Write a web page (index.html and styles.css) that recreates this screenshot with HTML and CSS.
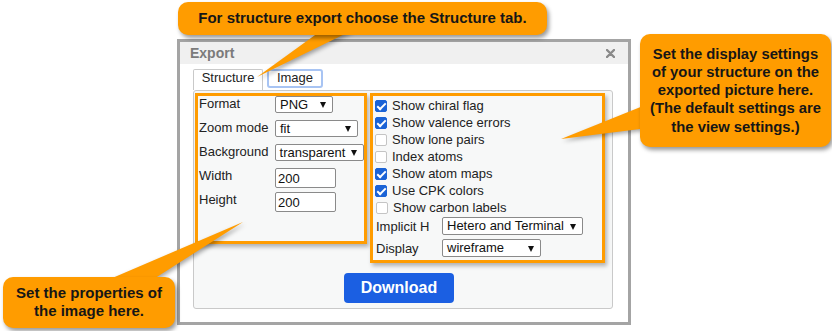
FILE: index.html
```html
<!DOCTYPE html>
<html>
<head>
<meta charset="utf-8">
<link rel="stylesheet" href="styles.css">
</head>
<body>
<div class="page">
  <div class="dialog">
    <div class="dlg-head">
      <span class="dlg-title">Export</span>
      <svg class="close" width="9" height="9" viewBox="0 0 9 9"><path d="M1 1L8 8M8 1L1 8" stroke="#8a8a8a" stroke-width="2.4" stroke-linecap="round"/></svg>
    </div>
    <div class="dlg-body">
      <div class="tabs">
        <div class="tab">Structure</div>
        <div class="tab tab-active">Image</div>
      </div>
      <div class="pane">
        <div class="boxes">
          <div class="obox props">
            <div class="frow"><span class="flabel">Format</span><div class="sel s-png">PNG</div></div>
            <div class="frow"><span class="flabel">Zoom mode</span><div class="sel s-zoom">fit</div></div>
            <div class="frow"><span class="flabel">Background</span><div class="sel s-bg">transparent</div></div>
            <div class="frow"><span class="flabel">Width</span><input class="num" type="text" value="200"></div>
            <div class="frow"><span class="flabel">Height</span><input class="num" type="text" value="200"></div>
          </div>
          <div class="obox settings">
            <label class="chk"><input type="checkbox" checked><span>Show chiral flag</span></label>
            <label class="chk"><input type="checkbox" checked><span>Show valence errors</span></label>
            <label class="chk"><input type="checkbox"><span>Show lone pairs</span></label>
            <label class="chk"><input type="checkbox"><span>Index atoms</span></label>
            <label class="chk"><input type="checkbox" checked><span>Show atom maps</span></label>
            <label class="chk"><input type="checkbox" checked><span>Use CPK colors</span></label>
            <label class="chk chk-last"><input type="checkbox"><span>Show carbon labels</span></label>
            <div class="srow first"><span class="slabel">Implicit H</span><div class="sel s-imp">Hetero and Terminal</div></div>
            <div class="srow"><span class="slabel">Display</span><div class="sel s-disp">wireframe</div></div>
          </div>
        </div>
        <button class="dl">Download</button>
      </div>
    </div>
  </div>

  <svg class="pointers" width="832" height="331" viewBox="0 0 832 331">
    <polygon points="322,30 353,30 257,77"/>
    <polygon points="648,104 648,128 561,139"/>
    <polygon points="103,282 149,282 243,222"/>
  </svg>

  <div class="callout c-top">For structure export choose the Structure tab.</div>
  <div class="callout c-right">Set the display settings<br>of your structure on the<br>exported picture here.<br>(The default settings are<br>the view settings.)</div>
  <div class="callout c-bl">Set the properties of<br>the image here.</div>
</div>
</body>
</html>
```
FILE: styles.css
```css
* { box-sizing: border-box; }
body { margin: 0; background: #fff; font-family: "Liberation Sans", Arial, sans-serif; }

.page { position: relative; width: 832px; height: 331px; overflow: hidden; padding: 39px 0 0 177px; }

.dialog { width: 454px; height: 286px; border: 3px solid #a4a4a4; background: #fff; }
.dlg-head { height: 22px; background: #f0f0f0; display: flex; align-items: center; justify-content: space-between; padding: 0 13px 0 10px; }
.dlg-title { font-weight: bold; font-size: 14px; color: #7b7b7b; }
.close { display: block; }

.dlg-body { padding: 5px 15px 0 13px; }
.tabs { display: flex; gap: 4px; height: 21px; align-items: flex-start; }
.tab { height: 21px; width: 70px; border: 1px solid #c9c9c9; border-bottom: none; border-radius: 2px 2px 0 0; background: #fff; font-size: 13px; color: #222; text-align: center; line-height: 16px; }
.tab-active { width: 56px; height: 19px; border: 2px solid #a8c4f3; border-radius: 3px; line-height: 14px; }

.pane { width: 420px; height: 219px; border: 1px solid #c9c9c9; border-radius: 3px; background: #f7f8f8; padding: 2px 0 0 1px; }
.boxes { display: flex; gap: 3px; align-items: flex-start; }
.obox { border: 3px solid #ff9c00; box-shadow: 2px 3px 4px rgba(0, 0, 0, 0.28); }
.props { width: 172px; height: 151px; padding-left: 1px; }
.settings { width: 235px; height: 170px; padding: 1px 0 0 2px; }

.frow { display: flex; height: 24px; align-items: flex-start; }
.flabel { width: 76px; font-size: 13px; line-height: 15px; color: #222; }

.sel { position: relative; height: 17px; border: 1px solid #8a8a8a; border-radius: 2px; background: #fff; font-size: 13px; color: #111; padding-left: 4px; line-height: 15px; }
.sel::after { content: ""; position: absolute; right: 6px; top: 5px; border-left: 3.5px solid transparent; border-right: 3.5px solid transparent; border-top: 6px solid #111; }
.s-png { width: 58px; }
.s-zoom { width: 83px; }
.s-bg { width: 90px; }
.s-imp { width: 141px; height: 18px; line-height: 16px; }
.s-disp { width: 99px; height: 18px; line-height: 16px; }
.s-imp::after, .s-disp::after { top: 5.5px; }

.num { width: 61px; height: 20px; border: 1px solid #8a8a8a; border-radius: 2px; background: #fff; font: 13px "Liberation Sans", Arial, sans-serif; color: #111; padding: 0 0 0 2px; margin: 0; }

.chk { display: flex; align-items: center; height: 17px; font-size: 13px; color: #222; gap: 5px; }
.chk input { appearance: none; -webkit-appearance: none; margin: 0; width: 12px; height: 12px; border: 1px solid #c4c4c4; border-radius: 2px; background: #fff; position: relative; flex: none; }
.chk input:checked { background: #1b63d6; border-color: #1b63d6; }
.chk input:checked::after { content: ""; position: absolute; left: 3px; top: 0px; width: 3px; height: 7px; border: solid #fff; border-width: 0 2px 2px 0; transform: rotate(45deg); }
.chk-last { padding-left: 1px; }

.srow { display: flex; align-items: center; height: 18px; margin-top: 4px; padding-left: 1px; }
.srow.first { margin-top: 1px; }
.slabel { width: 66px; font-size: 13px; color: #222; }

.dl { display: block; margin: 10px 0 0 149px; width: 110px; height: 30px; border: none; border-radius: 4px; background: #1b5fe2; color: #fff; font: bold 16px "Liberation Sans", Arial, sans-serif; padding: 0; }

.pointers { position: absolute; left: 0; top: 0; z-index: 2; pointer-events: none; }
.pointers polygon { fill: #ff9c00; filter: drop-shadow(2px 2px 2px rgba(0, 0, 0, 0.35)); }

.callout { position: absolute; z-index: 3; background: #ff9c00; border-radius: 10px; box-shadow: 2px 3px 4px rgba(0, 0, 0, 0.4); color: #161616; font-weight: bold; text-align: center; }
.c-top { left: 178px; top: 2px; width: 369px; height: 33px; padding-top: 6.5px; font-size: 15px; line-height: 18px; }
.c-right { left: 640px; top: 34px; width: 191px; height: 113px; padding-top: 10.5px; font-size: 14.8px; line-height: 18.3px; }
.c-bl { left: 3px; top: 277px; width: 172px; height: 51px; padding-top: 6.5px; font-size: 15px; line-height: 18.3px; }
```
